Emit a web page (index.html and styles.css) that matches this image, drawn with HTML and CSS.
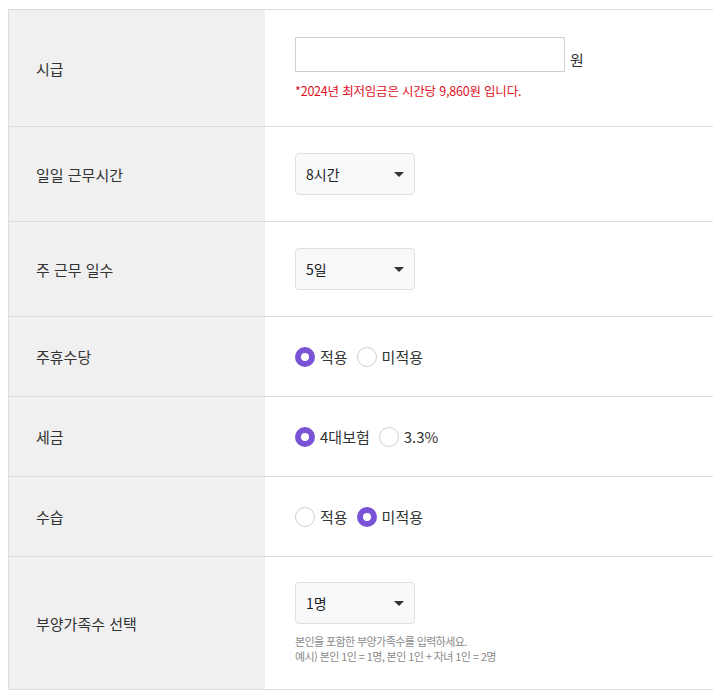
FILE: index.html
```html
<!DOCTYPE html>
<html lang="ko">
<head>
<meta charset="utf-8">
<link rel="stylesheet" href="styles.css">
</head>
<body>
<table class="calc">
  <tr class="r1">
    <th>시급</th>
    <td>
      <div class="wage"><input type="text" class="wage-input"><span class="unit">원</span></div>
      <p class="notice">*2024년 최저임금은 시간당 9,860원 입니다.</p>
    </td>
  </tr>
  <tr class="r2">
    <th>일일 근무시간</th>
    <td><div class="select"><span>8시간</span><i class="caret"></i></div></td>
  </tr>
  <tr class="r2">
    <th>주 근무 일수</th>
    <td><div class="select"><span>5일</span><i class="caret"></i></div></td>
  </tr>
  <tr class="r3">
    <th>주휴수당</th>
    <td><div class="radios"><label class="radio"><span class="dot on"></span>적용</label><label class="radio"><span class="dot"></span>미적용</label></div></td>
  </tr>
  <tr class="r3">
    <th>세금</th>
    <td><div class="radios"><label class="radio"><span class="dot on"></span>4대보험</label><label class="radio"><span class="dot"></span>3.3%</label></div></td>
  </tr>
  <tr class="r3">
    <th>수습</th>
    <td><div class="radios"><label class="radio"><span class="dot"></span>적용</label><label class="radio"><span class="dot on"></span>미적용</label></div></td>
  </tr>
  <tr class="r4">
    <th>부양가족수 선택</th>
    <td>
      <div class="select"><span>1명</span><i class="caret"></i></div>
      <p class="help">본인을 포함한 부양가족수를 입력하세요.<br>예시) 본인 1인 = 1명, 본인 1인 + 자녀 1인 = 2명</p>
    </td>
  </tr>
</table>
</body>
</html>
```

FILE: styles.css
```css
html, body {
  margin: 0;
  padding: 0;
  background: #fff;
}
body {
  padding: 9px 0 0 8px;
  font-family: "Noto Sans CJK KR", "Noto Sans", sans-serif;
  color: #333;
}
.calc {
  border-collapse: collapse;
  width: 705px;
  table-layout: fixed;
  border-top: 1px solid #dcdcdc;
}
.calc th, .calc td {
  border-bottom: 1px solid #dcdcdc;
  vertical-align: middle;
  padding: 0;
}
.calc th {
  width: 229px;
  background: #f0f0f0;
  border-left: 1px solid #dcdcdc;
  text-align: left;
  font-weight: 400;
  font-size: 15px;
  color: #333;
  padding-left: 27px;
}
.calc td {
  padding-left: 30px;
}
.r1 { height: 117px; }
.r2 { height: 95px; }
.r3 { height: 80px; }
.r4 { height: 133px; }
.wage {
  display: flex;
  align-items: flex-end;
  gap: 5px;
}
.wage-input {
  box-sizing: border-box;
  width: 270px;
  height: 35px;
  border: 1px solid #cfcfcf;
  margin: 0;
  padding: 0 8px;
  background: #fff;
}
.unit {
  font-size: 15px;
  line-height: 20px;
  margin-bottom: 2px;
}
.notice {
  margin: 10px 0 0;
  font-size: 12.5px;
  line-height: 18px;
  color: #e0101e;
  letter-spacing: -0.2px;
}
.select {
  box-sizing: border-box;
  width: 120px;
  height: 42px;
  background: #f8f9fa;
  border: 1px solid #e0e0e0;
  border-radius: 4px;
  display: flex;
  align-items: center;
  justify-content: space-between;
  padding: 0 10px 0 10px;
  font-size: 14px;
  color: #222;
}
.caret {
  width: 0;
  height: 0;
  border-left: 5px solid transparent;
  border-right: 5px solid transparent;
  border-top: 5px solid #333;
}
.radios {
  display: flex;
  align-items: center;
  gap: 9px;
}
.radio {
  display: flex;
  align-items: center;
  gap: 5px;
  font-size: 15px;
  color: #333;
}
.dot {
  box-sizing: border-box;
  width: 20px;
  height: 20px;
  border-radius: 50%;
  border: 1px solid #cfcfcf;
  background: #fff;
}
.dot.on {
  border: 6px solid #7a52d6;
}
.help {
  margin: 10px 0 0;
  font-size: 11px;
  line-height: 15px;
  color: #888;
  letter-spacing: -0.6px;
}
```
